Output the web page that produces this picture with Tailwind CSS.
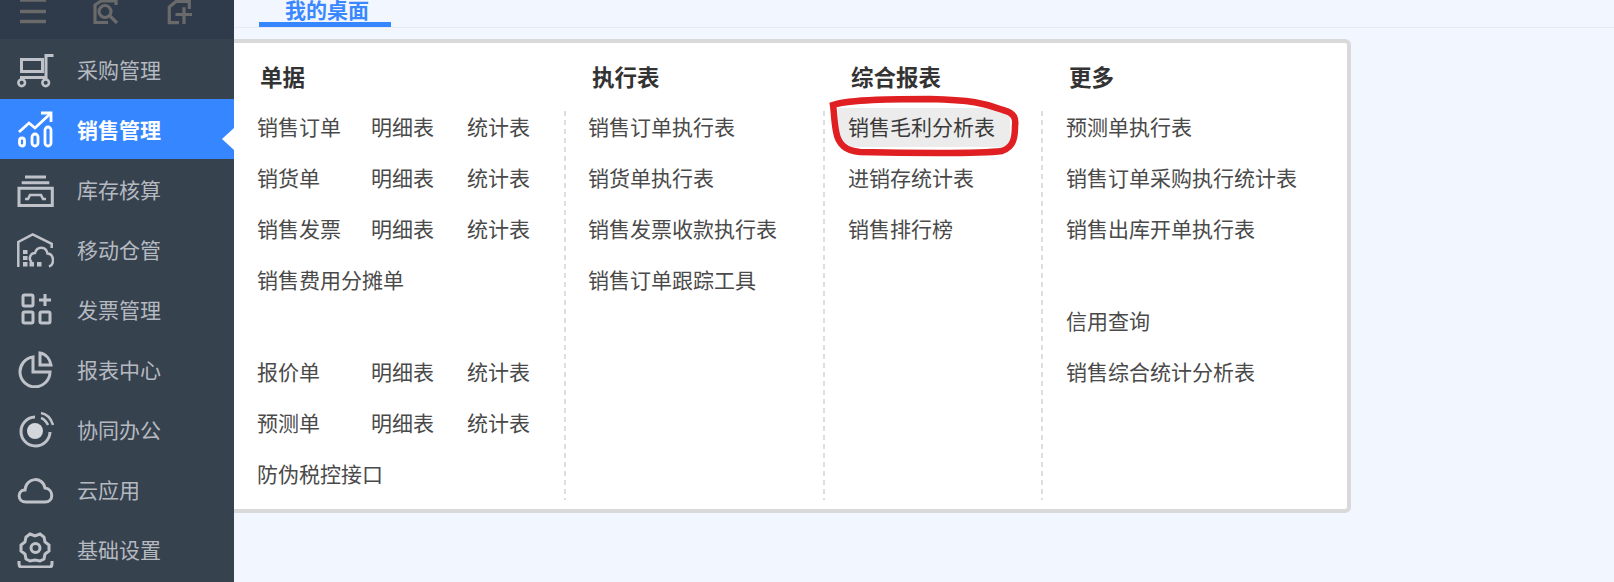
<!DOCTYPE html>
<html lang="zh-CN">
  <head>
    <meta charset="UTF-8" />
    <title>销售管理</title>
    <script src="https://cdn.jsdelivr.net/npm/@tailwindcss/browser@4"></script>
  </head>
  <body class="relative w-[1614px] h-[582px] overflow-hidden flex bg-[#f2f6fe] font-['Noto_Sans_CJK_SC','Noto_Sans',sans-serif]">
    <!-- left sidebar -->
    <aside class="w-[234px] h-full shrink-0 bg-[#37424f] text-[21px] text-[#b5b9c0]">
      <div class="h-[39px] bg-[#2f3a4b] overflow-hidden relative">
        <svg class="absolute left-[20px] top-0" width="26" height="24" viewBox="0 0 26 24" fill="none" stroke="#6a6a6a" stroke-width="3.5">
          <path d="M0 0h26M0 11.5h26M0 21.500h26" />
        </svg>
        <svg class="absolute left-[92px] top-0" width="28" height="26" viewBox="0 0 28 26" fill="none" stroke="#6a6a6a" stroke-width="3.2">
          <path d="M24 5V1H9L3 5V22.500H16" />
          <circle cx="13" cy="11.500" r="6" />
          <path d="M18 16l7 7" />
        </svg>
        <svg class="absolute left-[166px] top-0" width="28" height="26" viewBox="0 0 28 26" fill="none" stroke="#6a6a6a" stroke-width="3.2">
          <path d="M23.300 9V1.500H10L3.300 7V22.700H13" />
          <path d="M18 7.300V24M9.500 14.500H26" />
        </svg>
      </div>
      <nav>
        <a class="h-[60px] flex items-center pl-[17px]">
          <svg class="w-[37px] h-[37px] mr-[23px] shrink-0" viewBox="0 0 37 37" fill="none" stroke="#bfc3c9" stroke-width="3">
            <path d="M36.500 4.500H29V26.500H3" />
            <path d="M4.500 8.500h21v12h-21z" />
            <circle cx="4.700" cy="31.800" r="3.300" stroke-width="2.600" />
            <circle cx="28.700" cy="31.800" r="3.300" stroke-width="2.600" />
          </svg>
          <span class="pt-[2px]">采购管理</span>
        </a>
        <a class="relative h-[60px] flex items-center pl-[17px] bg-[#3687ff] text-white font-bold">
          <svg class="w-[37px] h-[37px] mr-[23px] shrink-0" viewBox="0 0 37 37" fill="none" stroke="#fff" stroke-width="2.800">
            <path d="M2 21l10-9 6 5L33 3" />
            <path d="M24 2h10v9" />
            <rect x="2.500" y="27" width="5" height="8" rx="2.500" />
            <rect x="15" y="23" width="6" height="12" rx="3" />
            <rect x="28" y="16" width="6" height="19" rx="3" />
          </svg>
          <span class="pt-[2px]">销售管理</span>
          <span class="absolute right-0 top-[29px] w-0 h-0 border-y-[11px] border-y-transparent border-r-[12px] border-r-white"></span>
        </a>
        <a class="h-[60px] flex items-center pl-[17px]">
          <svg class="w-[37px] h-[37px] mr-[23px] shrink-0" viewBox="0 0 37 37" fill="none" stroke="#bfc3c9" stroke-width="3">
            <path d="M8 6H29M4.700 11.800H32.300" />
            <path d="M2 17.200h33.300v17.300H2z" />
            <path d="M8 28h3l2-4h11l2 4h3" stroke-width="2.600" />
          </svg>
          <span class="pt-[2px]">库存核算</span>
        </a>
        <a class="h-[60px] flex items-center pl-[17px]">
          <svg class="w-[37px] h-[37px] mr-[23px] shrink-0" viewBox="0 0 37 37" fill="none" stroke="#bfc3c9" stroke-width="2.500">
            <path d="M1.300 36V11L15.700 3.500 34.700 12.800V17" />
            <path d="M15 31C11 29 13 22 18 22C20 15 29 15 30.500 22.500C37 23 38 33 32 35.500" />
            <path d="M6 19h4.500v4H6zM6 25h4.500v4H6zM6 31h4.500v4.500H6zM12.500 31H17v4.500h-4.500zM20 31h4.500v4.500H20z" fill="#bfc3c9" stroke="none" />
          </svg>
          <span class="pt-[2px]">移动仓管</span>
        </a>
        <a class="h-[60px] flex items-center pl-[17px]">
          <svg class="w-[37px] h-[37px] mr-[23px] shrink-0" viewBox="0 0 37 37" fill="none" stroke="#bfc3c9" stroke-width="3">
            <rect x="6" y="4" width="10" height="11" rx="1.500" />
            <rect x="6" y="21" width="10" height="11" rx="1.500" />
            <rect x="23" y="21" width="10" height="11" rx="1.500" />
            <path d="M28 3v12M22 9h12" />
          </svg>
          <span class="pt-[2px]">发票管理</span>
        </a>
        <a class="h-[60px] flex items-center pl-[17px]">
          <svg class="w-[37px] h-[37px] mr-[23px] shrink-0" viewBox="0 0 37 37" fill="none" stroke="#bfc3c9" stroke-width="3">
            <path d="M16 6a15 15 0 1 0 17 15H16z" />
            <path d="M23 2c6 1 10 6 11 12H23z" />
          </svg>
          <span class="pt-[2px]">报表中心</span>
        </a>
        <a class="h-[60px] flex items-center pl-[17px]">
          <svg class="w-[37px] h-[37px] mr-[23px] shrink-0" viewBox="0 0 37 37" fill="none" stroke="#bfc3c9" stroke-width="3">
            <path d="M18 6a14.500 14.500 0 1 0 15 15" />
            <path d="M24 2c5 1 10 5 12 12M24 7c3 1 5 3 7 7" stroke-width="2.500" />
            <circle cx="18" cy="20" r="8" fill="#d3d6db" stroke="none" />
          </svg>
          <span class="pt-[2px]">协同办公</span>
        </a>
        <a class="h-[60px] flex items-center pl-[17px]">
          <svg class="w-[37px] h-[37px] mr-[23px] shrink-0" viewBox="0 0 37 37" fill="none" stroke="#bfc3c9" stroke-width="3">
            <path d="M9 31c-9 0-9-12-1-12 1-13 18-14 20-2 9 1 9 14 0 14z" />
          </svg>
          <span class="pt-[2px]">云应用</span>
        </a>
        <a class="h-[60px] flex items-center pl-[17px]">
          <svg class="w-[37px] h-[37px] mr-[23px] shrink-0" viewBox="0 0 37 37" fill="none" stroke="#bfc3c9" stroke-width="3">
            <path d="M13 3l5 2 5-2 4 3 1 5 4 3v6l-4 3-1 5-4 2-5-1-5 1-4-2-1-5-4-3v-6l4-3 1-5z" />
            <circle cx="18.500" cy="17" r="4.500" />
            <path d="M2 30v3c0 2 1 3 3 3h27c2 0 3-1 3-3v-3" />
          </svg>
          <span class="pt-[2px]">基础设置</span>
        </a>
      </nav>
    </aside>

    <main class="flex-1 min-w-0">
      <!-- tab bar, cut off at the top of the shot -->
      <div class="h-[28px] border-b border-[#e6eaf2] pl-[25px] flex items-end">
        <div class="w-[132px] h-[27px] border-b-[5px] border-[#3687ff] pl-[4px] text-[21px] font-bold text-[#3a88ff] text-center leading-[18px] overflow-hidden">我的桌面</div>
      </div>

      <!-- sales menu panel -->
      <section class="mt-[11px] w-[1117px] h-[474px] bg-white border-[#d9d9d9] border-y-[4px] border-r-[4px] rounded-r-[6px] text-[21px] text-[#4a4a4a]">
        <div class="grid grid-cols-[330px_259px_218px_1fr] grid-rows-[68px_389px] h-full">
          <h3 class="pl-[26px] pt-[14px] text-[22.5px] leading-[38px] font-bold text-[#333]">单据</h3>
          <h3 class="pl-[28px] pt-[14px] text-[22.5px] leading-[38px] font-bold text-[#333]">执行表</h3>
          <h3 class="pl-[28px] pt-[14px] text-[22.5px] leading-[38px] font-bold text-[#333]">综合报表</h3>
          <h3 class="pl-[28px] pt-[14px] text-[22.5px] leading-[38px] font-bold text-[#333]">更多</h3>

          <div class="pl-[23px]">
            <ul class="-mt-[3px] leading-[37px] [&>li]:pb-[2px]">
              <li class="flex mb-[12px]"><span class="w-[114px]">销售订单</span><span class="w-[96px]">明细表</span><span>统计表</span></li>
              <li class="flex mb-[12px]"><span class="w-[114px]">销货单</span><span class="w-[96px]">明细表</span><span>统计表</span></li>
              <li class="flex mb-[12px]"><span class="w-[114px]">销售发票</span><span class="w-[96px]">明细表</span><span>统计表</span></li>
              <li class="mb-[53px]">销售费用分摊单</li>
              <li class="flex mb-[12px]"><span class="w-[114px]">报价单</span><span class="w-[96px]">明细表</span><span>统计表</span></li>
              <li class="flex mb-[12px]"><span class="w-[114px]">预测单</span><span class="w-[96px]">明细表</span><span>统计表</span></li>
              <li>防伪税控接口</li>
            </ul>
          </div>

          <div class="pl-[24px] bg-no-repeat bg-[length:2px_100%] bg-[repeating-linear-gradient(to_bottom,#dedede_0,#dedede_5px,transparent_5px,transparent_9px)]">
            <ul class="-mt-[3px] leading-[37px] [&>li]:pb-[2px]">
              <li class="mb-[12px]">销售订单执行表</li>
              <li class="mb-[12px]">销货单执行表</li>
              <li class="mb-[12px]">销售发票收款执行表</li>
              <li>销售订单跟踪工具</li>
            </ul>
          </div>

          <div class="pl-[15px] bg-no-repeat bg-[length:2px_100%] bg-[repeating-linear-gradient(to_bottom,#dedede_0,#dedede_5px,transparent_5px,transparent_9px)]">
            <ul class="-mt-[3px] leading-[37px] [&>li]:pb-[2px]">
              <li class="mb-[12px] w-[172px] px-[10px] bg-[#ececec] text-[#3a3a3a]">销售毛利分析表</li>
              <li class="mb-[12px] px-[10px]">进销存统计表</li>
              <li class="px-[10px]">销售排行榜</li>
            </ul>
          </div>

          <div class="pl-[25px] bg-no-repeat bg-[length:2px_100%] bg-[repeating-linear-gradient(to_bottom,#dedede_0,#dedede_5px,transparent_5px,transparent_9px)]">
            <ul class="-mt-[3px] leading-[37px] [&>li]:pb-[2px]">
              <li class="mb-[12px]">预测单执行表</li>
              <li class="mb-[12px]">销售订单采购执行统计表</li>
              <li class="mb-[53px]">销售出库开单执行表</li>
              <li class="mb-[12px]">信用查询</li>
              <li>销售综合统计分析表</li>
            </ul>
          </div>
        </div>
      </section>
    </main>

    <!-- red hand-drawn mark over the menu -->
    <svg class="absolute inset-0 pointer-events-none" width="1614" height="582" fill="none">
      <path d="M833 105C850 99 900 99 930 99C970 100 985 103 1003 110C1015 113 1016 119 1015 126C1015 137 1014 147 1002 151C980 154 900 153 860 152C845 151 838 144 836 131C834 121 834 111 833 105Z" stroke="#e01f22" stroke-width="6.500" />
    </svg>
  </body>
</html>
